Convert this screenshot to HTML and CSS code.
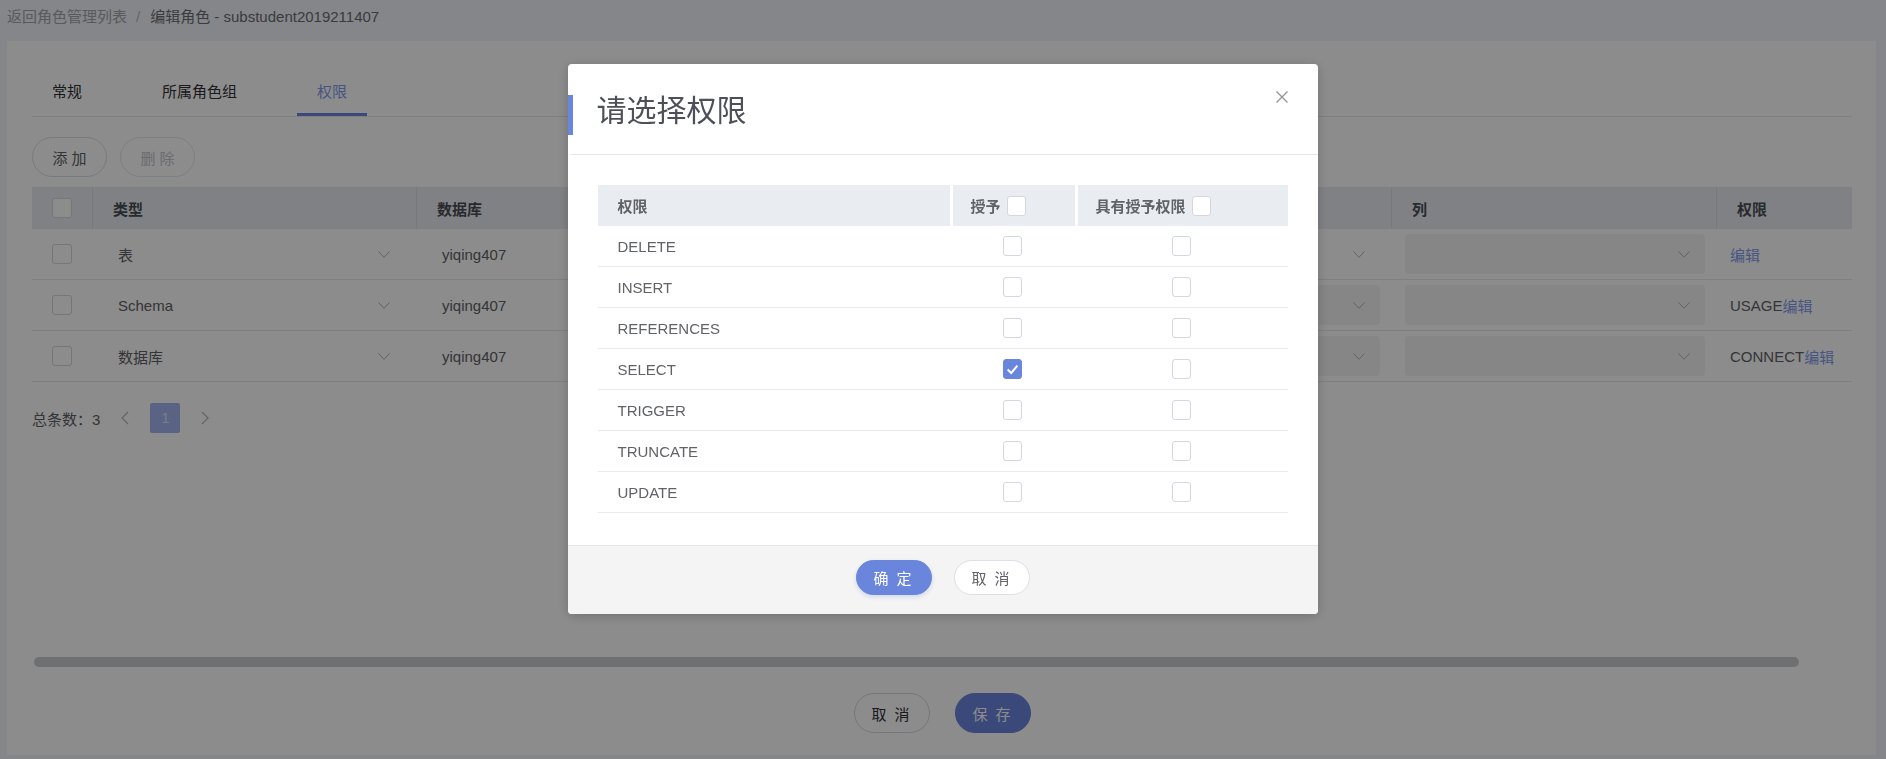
FILE: index.html
```html
<!DOCTYPE html>
<html lang="zh-CN">
<head>
<meta charset="utf-8">
<title>编辑角色</title>
<link rel="stylesheet" href="styles.css">
</head>
<body>
<div class="page">
  <div class="breadcrumb"><span class="crumb-back">返回角色管理列表</span><span class="crumb-sep">/</span><span class="crumb-cur">编辑角色 - substudent2019211407</span></div>
  <div class="card">
    <div class="tabs">
      <div class="tab">常规</div>
      <div class="tab">所属角色组</div>
      <div class="tab active">权限</div>
    </div>
    <div class="toolbar">
      <button class="btn-round">添 加</button>
      <button class="btn-round disabled">删 除</button>
    </div>
    <div class="table-area">
      <div class="grid grid-head">
        <div class="cell c-center"><span class="cb"></span></div>
        <div class="cell">类型</div>
        <div class="cell">数据库</div>
        <div class="cell"></div>
        <div class="cell"></div>
        <div class="cell">列</div>
        <div class="cell">权限</div>
      </div>
      <div class="grid grid-row">
        <div class="cell c-center"><span class="cb"></span></div>
        <div class="cell"><div class="sel plain"><span>表</span><svg class="chev" viewBox="0 0 12 7"><path d="M0.5 0.5 L6 6.3 L11.5 0.5"/></svg></div></div>
        <div class="cell"><div class="sel plain"><span>yiqing407</span></div></div>
        <div class="cell"><div class="sel"><span></span><svg class="chev" viewBox="0 0 12 7"><path d="M0.5 0.5 L6 6.3 L11.5 0.5"/></svg></div></div>
        <div class="cell"><div class="sel plain"><span></span><svg class="chev" viewBox="0 0 12 7"><path d="M0.5 0.5 L6 6.3 L11.5 0.5"/></svg></div></div>
        <div class="cell"><div class="sel"><span></span><svg class="chev" viewBox="0 0 12 7"><path d="M0.5 0.5 L6 6.3 L11.5 0.5"/></svg></div></div>
        <div class="cell perm"><a class="link">编辑</a></div>
      </div>
      <div class="grid grid-row">
        <div class="cell c-center"><span class="cb"></span></div>
        <div class="cell"><div class="sel plain"><span>Schema</span><svg class="chev" viewBox="0 0 12 7"><path d="M0.5 0.5 L6 6.3 L11.5 0.5"/></svg></div></div>
        <div class="cell"><div class="sel plain"><span>yiqing407</span></div></div>
        <div class="cell"><div class="sel"><span></span><svg class="chev" viewBox="0 0 12 7"><path d="M0.5 0.5 L6 6.3 L11.5 0.5"/></svg></div></div>
        <div class="cell"><div class="sel"><span></span><svg class="chev" viewBox="0 0 12 7"><path d="M0.5 0.5 L6 6.3 L11.5 0.5"/></svg></div></div>
        <div class="cell"><div class="sel"><span></span><svg class="chev" viewBox="0 0 12 7"><path d="M0.5 0.5 L6 6.3 L11.5 0.5"/></svg></div></div>
        <div class="cell perm">USAGE<a class="link">编辑</a></div>
      </div>
      <div class="grid grid-row">
        <div class="cell c-center"><span class="cb"></span></div>
        <div class="cell"><div class="sel plain"><span>数据库</span><svg class="chev" viewBox="0 0 12 7"><path d="M0.5 0.5 L6 6.3 L11.5 0.5"/></svg></div></div>
        <div class="cell"><div class="sel plain"><span>yiqing407</span></div></div>
        <div class="cell"><div class="sel"><span></span><svg class="chev" viewBox="0 0 12 7"><path d="M0.5 0.5 L6 6.3 L11.5 0.5"/></svg></div></div>
        <div class="cell"><div class="sel"><span></span><svg class="chev" viewBox="0 0 12 7"><path d="M0.5 0.5 L6 6.3 L11.5 0.5"/></svg></div></div>
        <div class="cell"><div class="sel"><span></span><svg class="chev" viewBox="0 0 12 7"><path d="M0.5 0.5 L6 6.3 L11.5 0.5"/></svg></div></div>
        <div class="cell perm">CONNECT<a class="link">编辑</a></div>
      </div>
      <div class="pager">
        <span class="total">总条数：3</span>
        <span class="pg-btn"><svg viewBox="0 0 8 14"><path d="M7 1 L1 7 L7 13"/></svg></span>
        <span class="pg-num">1</span>
        <span class="pg-btn"><svg viewBox="0 0 8 14"><path d="M1 1 L7 7 L1 13"/></svg></span>
      </div>
      <div class="hscroll"><div class="thumb"></div></div>
    </div>
    <div class="actions">
      <button class="btn-pill ghost">取 消</button>
      <button class="btn-pill primary">保 存</button>
    </div>
  </div>
</div>

<div class="mask"></div>
<div class="dialog-wrap">
  <div class="dialog">
    <div class="dlg-head">
      <span class="dlg-title">请选择权限</span>
      <svg class="dlg-close" viewBox="0 0 12 12"><path d="M0.5 0.5 L11.5 11.5 M11.5 0.5 L0.5 11.5"/></svg>
    </div>
    <div class="dlg-body">
      <div class="ptable">
        <div class="prow phead">
          <div class="pc">权限</div>
          <div class="pc">授予<span class="cb"></span></div>
          <div class="pc">具有授予权限<span class="cb"></span></div>
        </div>
        <div class="prow"><div class="pc">DELETE</div><div class="pc mid"><span class="cb"></span></div><div class="pc mid"><span class="cb"></span></div></div>
        <div class="prow"><div class="pc">INSERT</div><div class="pc mid"><span class="cb"></span></div><div class="pc mid"><span class="cb"></span></div></div>
        <div class="prow"><div class="pc">REFERENCES</div><div class="pc mid"><span class="cb"></span></div><div class="pc mid"><span class="cb"></span></div></div>
        <div class="prow"><div class="pc">SELECT</div><div class="pc mid"><span class="cb checked"><svg viewBox="0 0 12 10"><path d="M1.5 5 L4.8 8.2 L10.5 1.5"/></svg></span></div><div class="pc mid"><span class="cb"></span></div></div>
        <div class="prow"><div class="pc">TRIGGER</div><div class="pc mid"><span class="cb"></span></div><div class="pc mid"><span class="cb"></span></div></div>
        <div class="prow"><div class="pc">TRUNCATE</div><div class="pc mid"><span class="cb"></span></div><div class="pc mid"><span class="cb"></span></div></div>
        <div class="prow"><div class="pc">UPDATE</div><div class="pc mid"><span class="cb"></span></div><div class="pc mid"><span class="cb"></span></div></div>
      </div>
    </div>
    <div class="dlg-foot">
      <button class="btn-sm primary">确 定</button>
      <button class="btn-sm ghost-white">取 消</button>
    </div>
  </div>
</div>
</body>
</html>
```

FILE: styles.css
```css
* { box-sizing: border-box; }
html, body { height: 100%; }
body {
  margin: 0;
  background: #f2f4f9;
  font-family: "Liberation Sans", "Noto Sans CJK SC", sans-serif;
  font-size: 15px;
  color: #606266;
  overflow: hidden;
}
button { font-family: inherit; font-size: 15px; cursor: pointer; }

.page { padding: 0 10px 0 7px; }

.breadcrumb {
  height: 34px;
  line-height: 34px;
  white-space: nowrap;
}
.crumb-back { color: #a2a4aa; }
.crumb-sep { color: #b6b8be; margin: 0 10px 0 9px; }
.crumb-cur { color: #6a6c72; }

.card {
  margin-top: 7px;
  background: #fff;
  height: 714px;
  padding: 35px 24px 0 25px;
}

.tabs {
  display: flex;
  gap: 40px;
  border-bottom: 1px solid #e4e7ed;
  height: 41px;
}
.tab {
  padding: 0 20px;
  height: 40px;
  line-height: 32px;
  color: #303133;
}
.tab.active {
  color: #8299ee;
  border-bottom: 3px solid #6a85dc;
  height: 40px;
}

.toolbar {
  display: flex;
  gap: 13px;
  margin-top: 20px;
}
.btn-round {
  width: 75px;
  height: 40px;
  border-radius: 20px;
  border: 1px solid #dcdfe6;
  background: #fff;
  color: #606266;
}
.btn-round.disabled { color: #c0c4cc; border-color: #e4e7ed; }

.table-area {
  margin-top: 10px;
  height: 480px;
  display: flex;
  flex-direction: column;
}
.grid {
  display: grid;
  grid-template-columns: 60px 324px 325px 325px 325px 325px 136px;
}
.grid-head {
  background: #e9ecf1;
  height: 42px;
  color: #4a4d55;
  font-weight: 700;
}
.grid-head .cell {
  display: flex;
  align-items: center;
  padding-left: 20px;
  border-left: 1px solid #d9dce2;
}
.grid-head .cell:first-child { border-left: none; padding-left: 0; }

.grid-row {
  height: 51px;
  border-bottom: 1px solid #e6e8ed;
}
.grid-row .cell {
  display: flex;
  align-items: center;
  padding: 0 11px 0 14px;
}
.cell.c-center { justify-content: center; padding: 0 !important; }
.cell.perm { padding-left: 14px; color: #606266; white-space: nowrap; }
.link { color: #8299ee; cursor: pointer; }

.sel {
  flex: 1;
  height: 40px;
  border-radius: 4px;
  background: #f4f4f5;
  display: flex;
  align-items: center;
  justify-content: space-between;
  padding: 0 15px 0 12px;
  color: #606266;
}
.sel.plain { background: transparent; }
.chev { width: 12px; height: 7px; fill: none; stroke: #b0b3ba; stroke-width: 1; }

.cb {
  display: inline-flex;
  align-items: center;
  justify-content: center;
  width: 20px;
  height: 20px;
  border: 1px solid #d4d7de;
  border-radius: 3px;
  background: #fff;
  flex: none;
}
.cb.checked { background: #6a85dc; border-color: #6a85dc; }
.cb.checked svg { width: 13px; height: 11px; fill: none; stroke: #fff; stroke-width: 1.8; }

.pager {
  display: flex;
  align-items: center;
  margin-top: 21px;
  height: 30px;
}
.total { color: #606266; margin-right: 10px; }
.pg-btn {
  width: 30px;
  height: 30px;
  display: flex;
  align-items: center;
  justify-content: center;
}
.pg-btn svg { width: 8px; height: 14px; fill: none; stroke: #b4b7bd; stroke-width: 1.2; }
.pg-num {
  width: 30px;
  height: 30px;
  margin: 0 10px;
  border-radius: 2px;
  background: #a4b5ef;
  color: #dfe4f7;
  text-align: center;
  line-height: 30px;
}

.hscroll {
  margin-top: auto;
  height: 10px;
  padding-left: 2px;
}
.thumb {
  width: 1765px;
  height: 10px;
  border-radius: 5px;
  background: #cbccd0;
}

.actions {
  display: flex;
  justify-content: center;
  gap: 25px;
  margin-top: 26px;
}
.btn-pill {
  width: 76px;
  height: 40px;
  border-radius: 20px;
  letter-spacing: 2px;
}
.btn-pill.ghost { background: #fff; border: 1px solid #d6d8de; color: #303133; }
.btn-pill.primary { background: #6a85dc; border: 1px solid #6a85dc; color: #fff; }

.mask {
  position: fixed;
  inset: 0;
  background: rgba(0, 0, 0, 0.45);
}
.dialog-wrap {
  position: fixed;
  inset: 0;
  display: flex;
  justify-content: center;
  align-items: flex-start;
}
.dialog {
  margin-top: 64px;
  margin-left: -1px;
  width: 750px;
  height: 550px;
  background: #fff;
  border-radius: 4px;
  box-shadow: 0 2px 12px rgba(0, 0, 0, 0.2);
  display: flex;
  flex-direction: column;
  overflow: hidden;
}
.dlg-head {
  height: 91px;
  flex: none;
  border-bottom: 1px solid #e6e6e6;
  display: flex;
  align-items: center;
  justify-content: space-between;
  padding: 0 28px 8px 31px;
  border-left: 5px solid transparent;
  position: relative;
}
.dlg-head::before {
  content: "";
  position: absolute;
  left: -5px;
  top: 31px;
  width: 5px;
  height: 40px;
  background: #6a85dc;
}
.dlg-title {
  font-family: "Noto Sans CJK SC", sans-serif;
  font-size: 30px;
  color: #4d5059;
  margin-left: -7px;
  line-height: 40px;
  margin-top: 6px;
}
.dlg-close {
  width: 12px;
  height: 12px;
  fill: none;
  stroke: #909399;
  stroke-width: 1.3;
  margin-top: -16px;
  margin-right: 2px;
}
.dlg-body {
  flex: 1;
  padding: 30px 30px 0;
}
.ptable { width: 690px; }
.prow {
  display: grid;
  grid-template-columns: 352px 125px 213px;
  height: 41px;
  border-bottom: 1px solid #e8eaee;
}
.pc {
  display: flex;
  align-items: center;
  padding-left: 20px;
  color: #606266;
}
.pc.mid { justify-content: center; padding-left: 0; }
.phead {
  background: #e9ecf1;
  border-bottom: none;
  color: #4d5059;
  font-weight: 700;
}
.phead .pc { gap: 6px; }
.phead .pc + .pc { border-left: 3px solid #fff; padding-left: 18px; }
.phead .cb { width: 19px; height: 19px; }
.prow .cb { width: 19px; height: 20px; }
.dlg-foot {
  height: 69px;
  flex: none;
  background: #f4f4f4;
  border-top: 1px solid #e4e4e4;
  display: flex;
  justify-content: center;
  align-items: center;
  gap: 22px;
  padding-bottom: 6px;
}
.btn-sm {
  width: 76px;
  height: 35px;
  border-radius: 18px;
  font-size: 15px;
  letter-spacing: 2px;
}
.btn-sm.primary { background: #6a85dc; border: 1px solid #6a85dc; color: #fff; box-shadow: 0 2px 4px rgba(106, 133, 220, 0.25); }
.btn-sm.ghost-white { background: #fff; border: 1px solid #dcdfe6; color: #606266; }
```
